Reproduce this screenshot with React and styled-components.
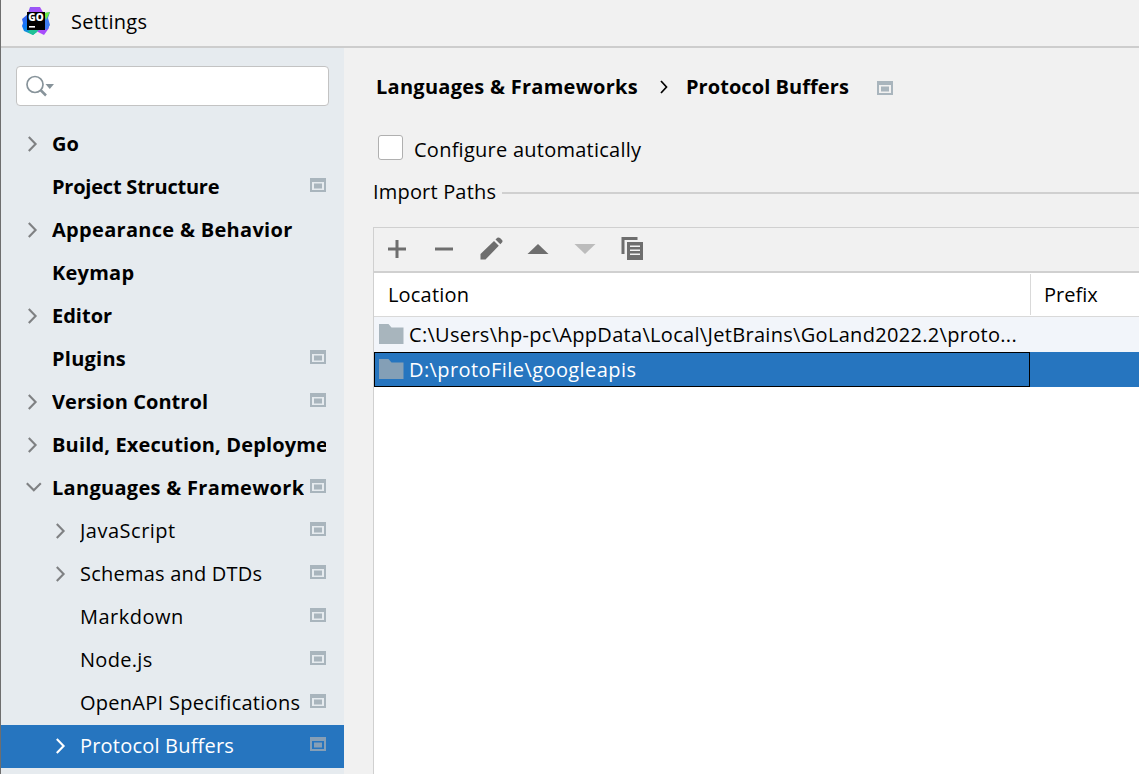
import React from 'react';
import styled, { createGlobalStyle } from 'styled-components';

const GlobalStyle = createGlobalStyle`
  * { box-sizing: border-box; }
  body {
    margin: 0;
    overflow: hidden;
    background: #f1f1f1;
    color: #000;
    font: 400 20px/26px "Open Sans", "Noto Sans", sans-serif;
  }
  svg { display: block; flex: none; }
`;

const Window = styled.div`
  width: 1139px;
  height: 774px;
  display: flex;
  flex-direction: column;
  overflow: hidden;
  border-left: 1px solid #6e6e6e;
  background: #f1f1f1;
`;

const TitleBar = styled.header`
  height: 48px;
  flex: none;
  display: flex;
  align-items: center;
  gap: 20px;
  padding: 0 0 2px 20px;
  border-bottom: 2px solid #cdcdcd;
`;

const LogoSlot = styled.span`
  padding-bottom: 2px;
`;

const Body = styled.div`
  flex: 1;
  min-height: 0;
  display: flex;
`;

const Label = styled.span`
  white-space: pre;
  letter-spacing: ${(p) => p.$track || 0}px;
  font-weight: ${(p) => (p.$bold ? 700 : 400)};
`;

const Sidebar = styled.nav`
  width: 343px;
  flex: none;
  padding-top: 18px;
  background: #e6ebef;
`;

const SearchField = styled.div`
  width: 313px;
  height: 40px;
  margin: 0 0 17px 15px;
  padding: 0 0 1px 8px;
  display: flex;
  align-items: center;
  background: #fff;
  border: 1px solid #c3c3c3;
  border-radius: 4px;
`;

const TreeRow = styled.div`
  height: 43px;
  display: flex;
  align-items: center;
  padding: 0 18px 2px ${(p) => (p.$child ? 51 : 23)}px;
  color: ${(p) => (p.$selected ? '#fff' : '#000')};
  background: ${(p) => (p.$selected ? '#2675bf' : 'transparent')};
`;

const ArrowSlot = styled.span`
  width: 28px;
  flex: none;
  color: ${(p) => (p.$selected ? '#fff' : '#7f8183')};
`;

const TreeLabel = styled(Label)`
  flex: 1;
  min-width: 0;
  overflow: hidden;
  margin-right: ${(p) => (p.$icon ? 6 : 0)}px;
`;

const TreeIcon = styled.span`
  padding-bottom: 4px;
`;

const Main = styled.main`
  flex: 1;
  min-width: 0;
  display: flex;
  flex-direction: column;
  padding: 26px 0 0 29px;
`;

const Breadcrumb = styled.div`
  height: 26px;
  display: flex;
  align-items: center;
  padding-left: 3px;
`;

const CrumbArrow = styled.span`
  margin: 0 18px 0 22px;
`;

const CrumbIcon = styled.span`
  margin: 2px 0 0 28px;
`;

const CheckRow = styled.label`
  display: flex;
  align-items: center;
  height: 26px;
  margin-top: 37px;
  padding-left: 5px;
  gap: 11px;
`;

const CheckBox = styled.span`
  width: 25px;
  height: 25px;
  margin-bottom: 5px;
  background: #fff;
  border: 1px solid #b0b0b0;
  border-radius: 3px;
`;

const SectionTitle = styled.div`
  display: flex;
  align-items: center;
  height: 26px;
  margin-top: 16px;
`;

const Rule = styled.span`
  flex: 1;
  height: 2px;
  margin: 1px 0 0 6px;
  background: #d0d0d0;
`;

const Panel = styled.section`
  flex: 1;
  min-height: 0;
  margin-top: 22px;
  border: 1px solid #d0d0d0;
  border-width: 1px 0 0 1px;
  background: #fff;
`;

const Toolbar = styled.div`
  height: 45px;
  display: flex;
  align-items: center;
  gap: 23px;
  padding: 0 0 1px 11px;
  background: #f1f1f1;
  border-bottom: 2px solid #d0d0d0;
`;

const TableHead = styled.div`
  height: 44px;
  display: flex;
  align-items: center;
  border-bottom: 1px solid #d9d9d9;
`;

const HeadCell = styled.div`
  width: ${(p) => p.$width || 'auto'};
  height: 41px;
  flex: none;
  display: flex;
  align-items: center;
  padding-left: ${(p) => p.$pad}px;
  border-right: ${(p) => (p.$width ? '1px solid #d9d9d9' : '0')};
`;

const TableRow = styled.div`
  height: 35px;
  display: flex;
  color: ${(p) => (p.$selected ? '#fff' : '#000')};
  background: ${(p) => (p.$selected ? '#2675bf' : '#f2f5fa')};
`;

const PathCell = styled.div`
  width: 656px;
  display: flex;
  align-items: center;
  gap: 5px;
  padding-left: 4px;
  border: 1px solid ${(p) => (p.$selected ? '#000' : 'transparent')};
`;

const FolderSlot = styled.span`
  padding-bottom: 2px;
`;

const Logo = () => (
  <svg width="30" height="30" viewBox="0 0 30 30">
    <defs>
      <linearGradient id="purple" x1="0" y1="0" x2="1" y2="1">
        <stop offset="0" stopColor="#8b5cf6" />
        <stop offset=".5" stopColor="#b44cf5" />
        <stop offset="1" stopColor="#a04dff" />
      </linearGradient>
      <linearGradient id="blue" x1="0" y1="0" x2=".6" y2="1">
        <stop offset="0" stopColor="#4b55f0" />
        <stop offset=".55" stopColor="#0b7cf5" />
        <stop offset="1" stopColor="#1bb5b0" />
      </linearGradient>
    </defs>
    <path d="M9 1h10l4 7 5 14-5 7-8-4L6 10z" fill="url(#purple)" />
    <path d="M20 8l9-2-2 6 2 7-3 5-6-4z" fill="#3f7cf0" />
    <path d="M23 7l6-1-4 8z" fill="#6dee45" />
    <path d="M1 13l6-5 5 14 4 4-4 3-9-4-2-5 1-3z" fill="url(#blue)" />
    <path d="M9 24h9l-6 5-5-3z" fill="#1fc295" />
    <rect x="6" y="6" width="18" height="18" fill="#000" />
    <rect x="8" y="20" width="6" height="1.6" fill="#fff" />
    <text x="7.3" y="15.2" fill="#fff" fontFamily="Open Sans, sans-serif" fontSize="9.6" fontWeight="800" textLength="15.4" lengthAdjust="spacingAndGlyphs">GO</text>
  </svg>
);

const SearchIcon = () => (
  <svg width="30" height="24" viewBox="0 0 30 24" fill="none" stroke="#87939a" strokeWidth="2">
    <circle cx="10" cy="10.5" r="8" strokeWidth="1.7" />
    <path d="M15.5 16l5.5 5.5" strokeWidth="2.5" />
    <path d="M20.5 10h8.5l-4.25 5z" fill="#87939a" stroke="none" />
  </svg>
);

const Chevron = ({ open }) => (
  <svg width="20" height="18" viewBox="0 0 20 18" fill="none" stroke="currentColor" strokeWidth="2.1">
    <path d={open ? 'M2.8 4.2l7 7 7-7' : 'M4.8 2l6.8 7-6.8 7'} />
  </svg>
);

const ProjectIcon = ({ selected }) => (
  <svg width="16" height="14" viewBox="0 0 16 14" fill={selected ? '#869fb6' : '#a9b5bd'}>
    <path fillRule="evenodd" d="M0 0h16v14H0zM2 4v8h12V4z" />
    <path d="M4 5.5h8v5H4z" />
  </svg>
);

const Folder = ({ selected }) => (
  <svg width="25" height="20" viewBox="0 0 25 20" fill={selected ? '#849fb6' : '#a8b5bd'}>
    <path d="M0 0h9.500l3 3.500H24.500V20H0z" />
  </svg>
);

const ToolIcon = ({ children, disabled }) => (
  <svg width="24" height="24" viewBox="0 0 24 24" fill={disabled ? '#bcbcbc' : '#6e6e6e'}>{children}</svg>
);

const tree = [
  { text: 'Go', arrow: true },
  { text: 'Project Structure', icon: true, track: -0.22 },
  { text: 'Appearance & Behavior', arrow: true, track: 0.3 },
  { text: 'Keymap', track: 0.25 },
  { text: 'Editor', arrow: true },
  { text: 'Plugins', icon: true, track: 0.25 },
  { text: 'Version Control', arrow: true, icon: true, track: 0.06 },
  { text: 'Build, Execution, Deployment', arrow: true, track: 0.15 },
  { text: 'Languages & Frameworks', arrow: true, open: true, icon: true, track: 0.3 },
  { text: 'JavaScript', child: true, arrow: true, icon: true, track: 0.5 },
  { text: 'Schemas and DTDs', child: true, arrow: true, icon: true, track: 0.22 },
  { text: 'Markdown', child: true, icon: true, track: 0.5 },
  { text: 'Node.js', child: true, icon: true, track: 0.3 },
  { text: 'OpenAPI Specifications', child: true, icon: true, track: 0.27 },
  { text: 'Protocol Buffers', child: true, arrow: true, icon: true, selected: true, track: 0.2 },
];

export default function App() {
  return (
    <>
      <GlobalStyle />
      <Window>
        <TitleBar>
          <LogoSlot><Logo /></LogoSlot>
          <Label $track={0.25}>Settings</Label>
        </TitleBar>
        <Body>
          <Sidebar>
            <SearchField><SearchIcon /></SearchField>
            {tree.map((n) => (
              <TreeRow key={n.text} $child={n.child} $selected={n.selected}>
                <ArrowSlot $selected={n.selected}>{n.arrow && <Chevron open={n.open} />}</ArrowSlot>
                <TreeLabel $bold={!n.child} $icon={n.icon} $track={n.track}>{n.text}</TreeLabel>
                {n.icon && <TreeIcon><ProjectIcon selected={n.selected} /></TreeIcon>}
              </TreeRow>
            ))}
          </Sidebar>
          <Main>
            <Breadcrumb>
              <Label $bold $track={0.27}>Languages &amp; Frameworks</Label>
              <CrumbArrow>
                <svg width="8" height="14" viewBox="0 0 8 14" fill="none" stroke="#000" strokeWidth="1.7">
                  <path d="M1 1l5.500 6L1 13" />
                </svg>
              </CrumbArrow>
              <Label $bold $track={0.06}>Protocol Buffers</Label>
              <CrumbIcon><ProjectIcon /></CrumbIcon>
            </Breadcrumb>
            <CheckRow>
              <CheckBox />
              <Label $track={0.25}>Configure automatically</Label>
            </CheckRow>
            <SectionTitle>
              <Label $track={0.18}>Import Paths</Label>
              <Rule />
            </SectionTitle>
            <Panel>
              <Toolbar>
                <ToolIcon><path d="M10.500 3h3v7.500H21v3h-7.500V21h-3v-7.500H3v-3h7.500z" /></ToolIcon>
                <ToolIcon><path d="M3 10.500h18v3H3z" /></ToolIcon>
                <ToolIcon><path d="M1.500 22.500v-5.500L15 4l4.800 4.800L6.500 22.500zM16.500 2.500l1.800-1.700q1.500-1 3 .5l1.700 1.700q1 1.200 0 2.500l-1.700 1.800z" /></ToolIcon>
                <ToolIcon><path d="M1.500 17L12 7l10.500 10z" /></ToolIcon>
                <ToolIcon disabled><path d="M1.500 7h21L12 17z" /></ToolIcon>
                <ToolIcon>
                  <path d="M1.500 0h16v3h-13v14h-3z" />
                  <path fillRule="evenodd" d="M7 5h16v18H7zM10 8.500v1.500h10V8.500zM10 12.500v1.500h10v-1.500zM10 16.500v1.500h10v-1.500z" />
                </ToolIcon>
              </Toolbar>
              <TableHead>
                <HeadCell $width="657px" $pad={14}><Label $track={0.18}>Location</Label></HeadCell>
                <HeadCell $pad={13}><Label>Prefix</Label></HeadCell>
              </TableHead>
              <TableRow>
                <PathCell>
                  <FolderSlot><Folder /></FolderSlot>
                  <Label $track={0.31}>{'C:\\Users\\hp-pc\\AppData\\Local\\JetBrains\\GoLand2022.2\\proto...'}</Label>
                </PathCell>
              </TableRow>
              <TableRow $selected>
                <PathCell $selected>
                  <FolderSlot><Folder selected /></FolderSlot>
                  <Label $track={0.42}>{'D:\\protoFile\\googleapis'}</Label>
                </PathCell>
              </TableRow>
            </Panel>
          </Main>
        </Body>
      </Window>
    </>
  );
}
